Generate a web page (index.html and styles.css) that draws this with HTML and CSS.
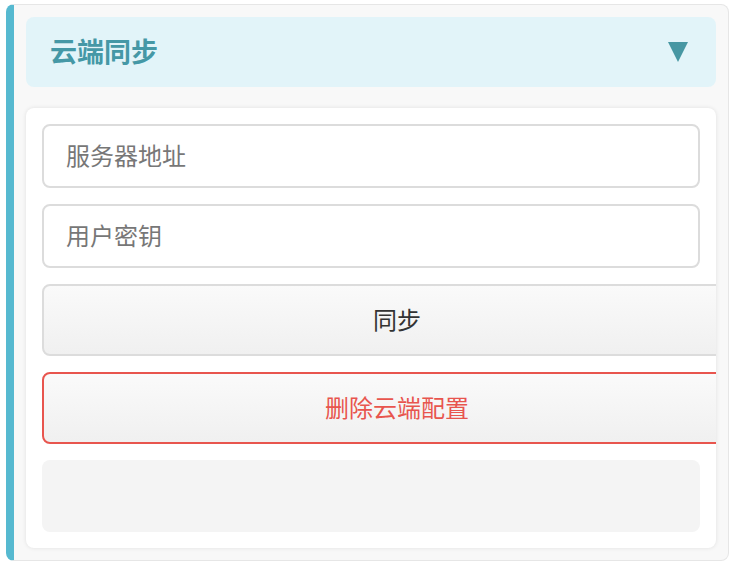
FILE: index.html
```html
<!DOCTYPE html>
<html lang="zh-CN">
<head>
  <meta charset="UTF-8">
  <meta name="viewport" content="width=device-width, initial-scale=1.0">
  <title>云端同步</title>
  <link rel="stylesheet" href="styles.css">
</head>
<body>
  <div class="card">
    <!-- 标题栏 -->
    <div class="card-header">
      <h2 class="card-title">云端同步</h2>
      <span class="arrow"></span>
    </div>

    <div class="card-body">
      <input type="text" class="field" placeholder="服务器地址">
      <input type="password" class="field" placeholder="用户密钥">

      <button class="btn">同步</button>
      <button class="btn btn-danger">删除云端配置</button>

      <!-- 状态信息 -->
      <div class="status"></div>
    </div>
  </div>
</body>
</html>
```

FILE: styles.css
```css
body {
  margin: 4px 5px 0 6px;
  font-family: "Noto Sans CJK SC", "Liberation Sans", sans-serif;
  background-color: #fff;
}
.card {
  background-color: #f8f8f8;
  border: 1px solid #e6e6e6;
  border-left: 8px solid #56b9d0; /* barra azzurra a sinistra */
  border-radius: 8px;
  padding: 12px;
}
.card-header {
  display: flex;
  align-items: center;
  justify-content: space-between;
  height: 70px;
  padding: 0 28px 0 24px;
  background-color: #e2f4f9;
  border-radius: 8px;
}
.card-title {
  margin: 0 0 4px;
  font-size: 27px;
  font-weight: bold;
  line-height: 1;
  color: #4598a6;
}
.arrow {
  width: 0;
  height: 0;
  border-left: 10px solid transparent;
  border-right: 10px solid transparent;
  border-top: 20px solid #4797a3;
}
.card-body {
  margin-top: 21px;
  padding: 16px;
  background-color: #fff;
  border-radius: 8px;
  box-shadow: 0 0 4px rgba(0, 0, 0, 0.1);
  overflow: hidden;
}
.field {
  display: block;
  box-sizing: border-box;
  width: 100%;
  height: 64px;
  margin: 0 0 16px;
  padding: 0 22px 4px;
  border: 2px solid #dcdcdc;
  border-radius: 8px;
  font-family: inherit;
  font-size: 24px;
  color: #333;
  background-color: #fff;
  outline: none;
}
.field::placeholder {
  color: #777;
}
.btn {
  display: block;
  box-sizing: content-box;
  width: 100%;
  height: 64px;
  margin: 0 0 16px;
  padding: 0 24px 4px;
  border: 2px solid #dcdcdc;
  border-radius: 8px;
  background: linear-gradient(#fafafa, #f0f0f0);
  font-family: inherit;
  font-size: 24px;
  color: #333;
  cursor: pointer;
}
.btn-danger {
  border-color: #e8554e;
  color: #e8554e;
}
.status {
  height: 72px;
  background-color: #f4f4f4;
  border-radius: 8px;
}
```
